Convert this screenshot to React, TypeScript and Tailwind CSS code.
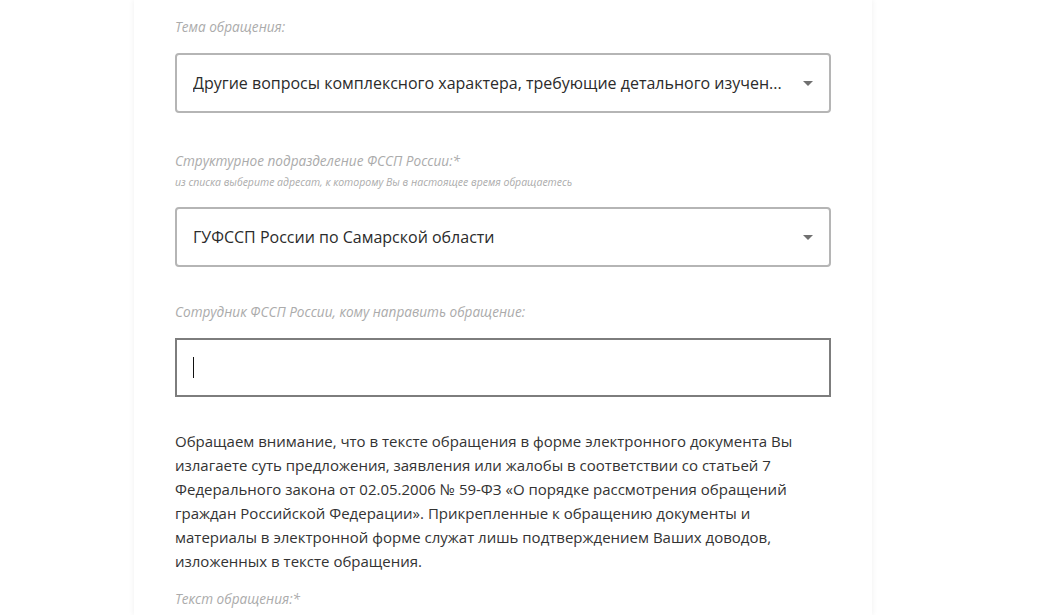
import React from "react";

const Arrow = () => (
  <svg width="10" height="5" viewBox="0 0 10 5" className="shrink-0 mr-[1px]">
    <path d="M0 0 L10 0 L5 5 Z" fill="#707070" />
  </svg>
);

export default function App() {
  const label = "text-[13.6px] leading-[16px] italic text-[#ababab] font-['Open_Sans',sans-serif]";
  return (
    <div className="w-[1040px] h-[615px] bg-white overflow-hidden">
      <div className="ml-[134px] w-[738px] h-[615px] bg-white shadow-[0_0_6px_rgba(0,0,0,0.07)] px-[41px] pt-[19px] flex flex-col font-['Open_Sans',sans-serif]">
        <div className={label}>Тема обращения:</div>
        <div className="mt-[18px] h-[60px] border-2 border-[#b5b5b5] rounded-[4px] flex items-center pl-[16px] pr-[15px] justify-between">
          <span className="text-[16px] text-[#2b2b2b] truncate">Другие вопросы комплексного характера, требующие детального изучен...</span>
          <Arrow />
        </div>
        <div className={label + " mt-[40px]"}>Структурное подразделение ФССП России:*</div>
        <div className="mt-[7px] text-[10.5px] leading-[12px] italic text-[#ababab]">из списка выберите адресат, к которому Вы в настоящее время обращаетесь</div>
        <div className="mt-[19px] h-[60px] border-2 border-[#b5b5b5] rounded-[4px] flex items-center pl-[16px] pr-[15px] justify-between">
          <span className="text-[16px] text-[#2b2b2b]">ГУФССП России по Самарской области</span>
          <Arrow />
        </div>
        <div className={label + " mt-[37px]"}>Сотрудник ФССП России, кому направить обращение:</div>
        <div className="mt-[18px] h-[59px] border-2 border-[#7d7d7d] flex items-center pl-[16px]">
          <span className="w-px h-[21px] bg-[#111]" />
        </div>
        <p className="mt-[32px] text-[15px] leading-[24px] text-[#333]">
          Обращаем внимание, что в тексте обращения в форме электронного документа Вы излагаете суть предложения, заявления или жалобы в соответствии со статьей 7 Федерального закона от 02.05.2006 № 59-ФЗ «О порядке рассмотрения обращений граждан Российской Федерации». Прикрепленные к обращению документы и материалы в электронной форме служат лишь подтверждением Ваших доводов, изложенных в тексте обращения.
        </p>
        <div className={label + " mt-[18px]"}>Текст обращения:*</div>
      </div>
    </div>
  );
}
